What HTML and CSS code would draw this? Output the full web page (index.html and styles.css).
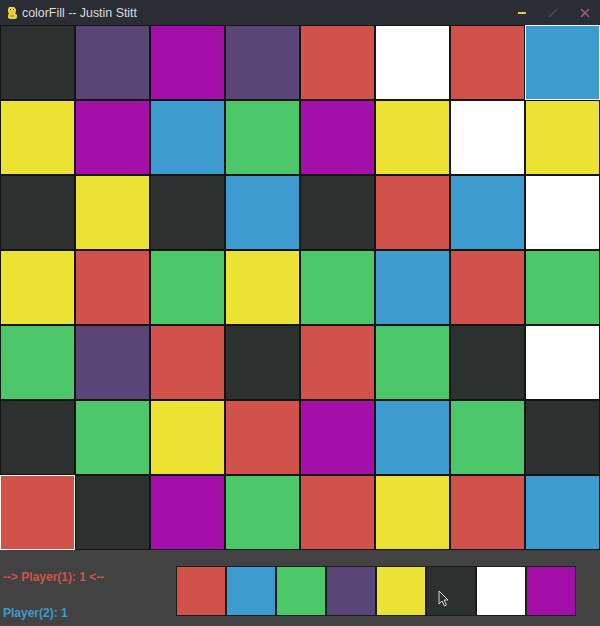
FILE: index.html
```html
<!DOCTYPE html>
<html>
<head>
<meta charset="utf-8">
<link rel="stylesheet" href="styles.css">
</head>
<body>
<div class="window">
  <div class="titlebar">
    <svg class="app-icon" width="12" height="14" viewBox="0 0 12 14">
      <path d="M3 1h5l2 2v3l-1 1 2 2v3l-2 1H4L2 12V9l1-1-1-2V3z" fill="#e8d43a"/>
      <path d="M4 3h1v1H4zM7 3h1v1H7z" fill="#3a3a20"/>
      <path d="M4 9h4v2H4z" fill="#b5a22a"/>
    </svg>
    <span class="title">colorFill -- Justin Stitt</span>
    <div class="controls">
      <span class="ctl-min"></span>
      <svg class="ctl-max" width="10" height="10" viewBox="0 0 10 10"><path d="M1 9L9 1" stroke="#4a4d58" stroke-width="1.5"/></svg>
      <svg class="ctl-close" width="10" height="10" viewBox="0 0 10 10"><path d="M1 1L9 9M9 1L1 9" stroke="#a0607a" stroke-width="1.5"/></svg>
    </div>
  </div>
  <div class="board">
    <div class="cell k"></div><div class="cell p"></div><div class="cell m"></div><div class="cell p"></div><div class="cell r"></div><div class="cell w"></div><div class="cell r"></div><div class="cell b sel"></div>
    <div class="cell y"></div><div class="cell m"></div><div class="cell b"></div><div class="cell g"></div><div class="cell m"></div><div class="cell y"></div><div class="cell w"></div><div class="cell y"></div>
    <div class="cell k"></div><div class="cell y"></div><div class="cell k"></div><div class="cell b"></div><div class="cell k"></div><div class="cell r"></div><div class="cell b"></div><div class="cell w"></div>
    <div class="cell y"></div><div class="cell r"></div><div class="cell g"></div><div class="cell y"></div><div class="cell g"></div><div class="cell b"></div><div class="cell r"></div><div class="cell g"></div>
    <div class="cell g"></div><div class="cell p"></div><div class="cell r"></div><div class="cell k"></div><div class="cell r"></div><div class="cell g"></div><div class="cell k"></div><div class="cell w"></div>
    <div class="cell k"></div><div class="cell g"></div><div class="cell y"></div><div class="cell r"></div><div class="cell m"></div><div class="cell b"></div><div class="cell g"></div><div class="cell k"></div>
    <div class="cell r sel"></div><div class="cell k"></div><div class="cell m"></div><div class="cell g"></div><div class="cell r"></div><div class="cell y"></div><div class="cell r"></div><div class="cell b"></div>
  </div>
  <div class="panel">
    <div class="players">
      <div class="p1">--&gt; Player(1): 1 &lt;--</div>
      <div class="p2">Player(2): 1</div>
    </div>
    <div class="palette">
      <div class="swatch r"></div><div class="swatch b"></div><div class="swatch g"></div><div class="swatch p"></div><div class="swatch y"></div><div class="swatch k"></div><div class="swatch w"></div><div class="swatch m"></div>
    </div>
    <svg class="cursor" width="12" height="18" viewBox="0 0 12 18">
      <path d="M1 1V14L4 11L6.5 16L8.5 15L6 10H10Z" fill="#2c3130" stroke="#d8d8d8" stroke-width="1"/>
    </svg>
  </div>
</div>
</body>
</html>
```

FILE: styles.css
```css
* { box-sizing: border-box; }
html, body { margin: 0; padding: 0; }
body {
  width: 600px;
  height: 626px;
  overflow: hidden;
  background: #424242;
  font-family: "Liberation Sans", Arial, sans-serif;
}
.window { width: 600px; height: 626px; display: flex; flex-direction: column; }
.titlebar {
  height: 25px;
  background: #2b2d35;
  display: flex;
  align-items: center;
  padding-left: 6px;
  color: #dcdcdc;
  font-size: 12.4px;
}
.app-icon { margin-right: 4px; }
.controls {
  margin-left: auto;
  display: flex;
  align-items: center;
  gap: 22px;
  padding-right: 10px;
}
.ctl-min { width: 8px; height: 2px; background: #e6c94a; display: block; }
.board {
  display: grid;
  grid-template-columns: repeat(8, 75px);
  grid-auto-rows: 75px;
}
.cell { border: 1px solid #141414; }
.cell.sel { border-color: #f4f4f4; }
.k { background: #2c3130; }
.p { background: #594677; }
.m { background: #a50fa9; }
.r { background: #d1524a; }
.w { background: #fefefe; }
.b { background: #3d9bd0; }
.g { background: #4cc76a; }
.y { background: #ebe234; }
.panel {
  position: relative;
  flex: 1;
  background: #424242;
  display: flex;
}
.players {
  width: 176px;
  padding-left: 3px;
  font-weight: bold;
  font-size: 12px;
}
.p1 { color: #d1524a; margin-top: 20px; }
.p2 { color: #3d9bd0; margin-top: 22px; }
.palette {
  display: flex;
  margin-top: 16px;
  height: 50px;
}
.swatch { width: 50px; height: 50px; border: 1px solid #1c1c1c; }
.cursor { position: absolute; left: 438px; top: 40px; }
```
